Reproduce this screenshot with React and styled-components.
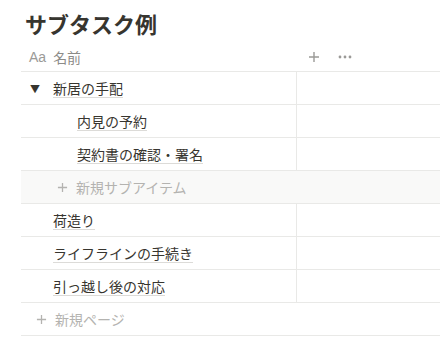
import React from 'react';
import styled, { createGlobalStyle } from 'styled-components';

const GlobalStyle = createGlobalStyle`
  body {
    margin: 0;
    background: #ffffff;
    font-family: "Noto Sans CJK JP", "Noto Sans", sans-serif;
    color: #37352f;
  }
`;

const Page = styled.div`
  width: 440px;
  height: 344px;
  overflow: hidden;
  padding-left: 21px;
  box-sizing: border-box;
`;

const Title = styled.h1`
  margin: 0;
  padding: 8px 0 0 4px;
  height: 34px;
  font-size: 22px;
  font-weight: 700;
  line-height: 30px;
  color: #37352f;
`;

const HeaderRow = styled.div`
  display: flex;
  align-items: center;
  height: 29px;
  border-bottom: 1px solid #e9e9e7;
`;

const HeaderName = styled.div`
  display: flex;
  align-items: center;
  gap: 7px;
  width: 276px;
  padding-left: 8px;
  box-sizing: border-box;
  font-size: 14px;
  color: #8c8b88;
`;

const Aa = styled.span`
  font-family: "Liberation Sans", Arial, sans-serif;
  font-size: 14px;
  color: #9b9a97;
`;

const HeaderActions = styled.div`
  display: flex;
  align-items: center;
  gap: 18px;
  padding-left: 11px;
  color: #9b9a97;
`;

const Row = styled.div`
  display: flex;
  height: 32px;
  border-bottom: 1px solid #e9e9e7;
  background: ${({ $shaded }) => ($shaded ? '#f9f9f8' : '#ffffff')};
`;

const NameCell = styled.div`
  display: flex;
  align-items: center;
  width: 276px;
  flex-shrink: 0;
  padding-left: ${({ $indent }) => $indent}px;
  box-sizing: border-box;
  border-right: ${({ $full }) => ($full ? 'none' : '1px solid #e9e9e7')};
  font-size: 14px;
`;

const Toggle = styled.span`
  width: 32px;
  font-size: 10px;
  color: #37352f;
  padding-left: 9px;
  box-sizing: border-box;
`;

const PageTitle = styled.span`
  line-height: 18px;
  border-bottom: 1px solid #dcdbd8;
  color: #37352f;
`;

const AddLabel = styled.span`
  display: flex;
  align-items: center;
  gap: 8px;
  color: #b4b3b0;
  font-size: 14px;
`;

const Plus = ({ size = 11, color = '#b4b3b0' }) => (
  <svg width={size} height={size} viewBox="0 0 12 12">
    <path d="M6 1v10M1 6h10" stroke={color} strokeWidth="1.4" />
  </svg>
);

const Dots = () => (
  <svg width="14" height="4" viewBox="0 0 14 4">
    <circle cx="2" cy="2" r="1.4" fill="#9b9a97" />
    <circle cx="7" cy="2" r="1.4" fill="#9b9a97" />
    <circle cx="12" cy="2" r="1.4" fill="#9b9a97" />
  </svg>
);

const pages = ['荷造り', 'ライフラインの手続き', '引っ越し後の対応'];

export default function App() {
  return (
    <Page>
      <GlobalStyle />
      <Title>サブタスク例</Title>
      <HeaderRow>
        <HeaderName>
          <Aa>Aa</Aa>
          <span>名前</span>
        </HeaderName>
        <HeaderActions>
          <Plus size={12} color="#9b9a97" />
          <Dots />
        </HeaderActions>
      </HeaderRow>

      <Row>
        <NameCell $indent={0}>
          <Toggle>▼</Toggle>
          <PageTitle>新居の手配</PageTitle>
        </NameCell>
      </Row>
      <Row>
        <NameCell $indent={56}>
          <PageTitle>内見の予約</PageTitle>
        </NameCell>
      </Row>
      <Row>
        <NameCell $indent={56}>
          <PageTitle>契約書の確認・署名</PageTitle>
        </NameCell>
      </Row>
      <Row $shaded>
        <NameCell $indent={36} $full>
          <AddLabel>
            <Plus />
            新規サブアイテム
          </AddLabel>
        </NameCell>
      </Row>

      {pages.map((p) => (
        <Row key={p}>
          <NameCell $indent={32}>
            <PageTitle>{p}</PageTitle>
          </NameCell>
        </Row>
      ))}

      <Row>
        <NameCell $indent={15} $full>
          <AddLabel>
            <Plus />
            新規ページ
          </AddLabel>
        </NameCell>
      </Row>
    </Page>
  );
}
